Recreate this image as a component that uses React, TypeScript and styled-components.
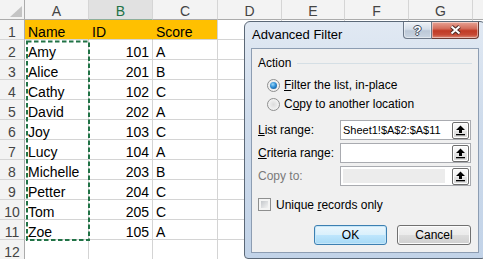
import React from "react";
import styled, { createGlobalStyle } from "styled-components";

const GlobalStyle = createGlobalStyle`
  html, body { margin: 0; padding: 0; background: #fff; overflow: hidden; }
  body { font-family: "Liberation Sans", Arial, sans-serif; }
`;

const colWidths = [64, 64, 65, 64, 63, 64, 64, 64];
// last column sits off the right edge, so its letter is not shown
const colNames = ["A", "B", "C", "D", "E", "F", "G", ""];

type Row = { name: string; id: string; score: string };
const data: Row[] = [
  { name: "Amy", id: "101", score: "A" },
  { name: "Alice", id: "201", score: "B" },
  { name: "Cathy", id: "102", score: "C" },
  { name: "David", id: "202", score: "A" },
  { name: "Joy", id: "103", score: "C" },
  { name: "Lucy", id: "104", score: "A" },
  { name: "Michelle", id: "203", score: "B" },
  { name: "Petter", id: "204", score: "C" },
  { name: "Tom", id: "205", score: "C" },
  { name: "Zoe", id: "105", score: "A" },
];

const Page = styled.div`
  position: relative;
  width: 483px;
  height: 259px;
  overflow: hidden;
`;

const Sheet = styled.div`
  display: grid;
  grid-template-columns: 25px ${colWidths.map((w) => w + "px").join(" ")};
  grid-auto-rows: 20px;
  font-size: 14px;
`;

const HeaderBase = styled.div`
  box-sizing: border-box;
  background: #f3f3f3;
  color: #444;
  text-align: center;
  padding-top: 3px;
  line-height: 16px;
  white-space: nowrap;
  overflow: hidden;
`;

const Corner = styled(HeaderBase)`
  display: flex;
  justify-content: flex-end;
  align-items: flex-end;
  padding: 0 2px 2px 0;
  border-right: 1px solid #ababab;
  border-bottom: 1px solid #ababab;
`;

const ColHeader = styled(HeaderBase)<{ $selected?: boolean }>`
  border-right: 1px solid #d5d5d5;
  border-bottom: 1px solid ${(p) => (p.$selected ? "#8fae9a" : "#ababab")};
  background: ${(p) => (p.$selected ? "#e1e1e1" : "#f3f3f3")};
  color: ${(p) => (p.$selected ? "#217346" : "#444")};
`;

const RowHeader = styled(HeaderBase)`
  padding-top: 4px;
  border-right: 1px solid #ababab;
  border-bottom: 1px solid #d5d5d5;
`;

const Cell = styled.div<{ $fill?: string; $right?: boolean; $joined?: boolean }>`
  box-sizing: border-box;
  padding: 4px 3px 0 3px;
  line-height: 16px;
  color: #000;
  white-space: nowrap;
  text-align: ${(p) => (p.$right ? "right" : "left")};
  background: ${(p) => p.$fill || "#fff"};
  border-right: 1px solid ${(p) => (p.$joined ? p.$fill : "#d4d4d4")};
  border-bottom: 1px solid #d4d4d4;
`;

const CopyMarquee = styled.svg`
  position: absolute;
  left: 25px;
  top: 40px;
`;

const Window = styled.div`
  position: absolute;
  left: 244px;
  top: 21px;
  width: 242px;
  height: 238px;
  box-sizing: border-box;
  border: 1px solid #5b6877;
  border-radius: 6px 6px 4px 4px;
  background: linear-gradient(#e1e9f3, #cfdcec 40%, #c2d3e8);
  padding: 0 6px 5px 6px;
  display: flex;
  flex-direction: column;
  font-size: 12px;
  color: #000;
`;

const TitleBar = styled.div`
  height: 26px;
  display: flex;
  align-items: flex-start;
`;

const Title = styled.div`
  flex: 1;
  padding-left: 1px;
  line-height: 26px;
  font-size: 13px;
  color: #000;
`;

const CaptionButton = styled.div<{ $close?: boolean }>`
  height: 17px;
  width: ${(p) => (p.$close ? 47 : 29)}px;
  box-sizing: border-box;
  border: 1px solid ${(p) => (p.$close ? "#6d3a33" : "#6c7888")};
  border-top: none;
  border-left-width: ${(p) => (p.$close ? 0 : 1)}px;
  border-radius: ${(p) => (p.$close ? "0 0 4px 0" : "0 0 0 4px")};
  background: ${(p) =>
    p.$close
      ? "linear-gradient(#e8a395, #d46f5d 40%, #c03a26 55%, #c64a36 80%, #dc8a78)"
      : "linear-gradient(#eef2f7, #d5dee9 45%, #bcc8d7 55%, #cad5e2)"};
  box-shadow: inset 0 0 0 1px rgba(255, 255, 255, 0.45);
  display: flex;
  align-items: center;
  justify-content: center;
`;

const HelpGlyph = styled.span`
  font-weight: bold;
  font-size: 13px;
  line-height: 13px;
  color: #fff;
  text-shadow: -1px 0 #3e4a5a, 1px 0 #3e4a5a, 0 -1px #3e4a5a, 0 1px #3e4a5a;
`;

const Client = styled.div`
  flex: 1;
  box-sizing: border-box;
  border: 1px solid #8d9db2;
  background: #f0f0f0;
  padding: 7px 7px 0 6px;
  display: flex;
  flex-direction: column;
`;

const GroupHeader = styled.div`
  height: 14px;
  display: flex;
  align-items: center;
  line-height: 14px;
  &::after {
    content: "";
    flex: 1;
    height: 1px;
    margin-left: 6px;
    margin-right: -1px;
    background: #d5dfe5;
  }
`;

const OptionRow = styled.div<{ $first?: boolean }>`
  height: 18px;
  display: flex;
  align-items: center;
  gap: 4px;
  padding-left: 9px;
  margin-top: ${(p) => (p.$first ? 6 : 1)}px;
`;

const Radio = styled.span<{ $checked?: boolean }>`
  width: 13px;
  height: 13px;
  box-sizing: border-box;
  flex: none;
  border-radius: 50%;
  border: 1px solid #8e8f8f;
  background: radial-gradient(circle at 50% 50%, #dcdcdc 0, #eeeeee 55%, #fbfbfb 100%);
  display: flex;
  align-items: center;
  justify-content: center;
  &::after {
    content: "";
    width: 7px;
    height: 7px;
    border-radius: 50%;
    display: ${(p) => (p.$checked ? "block" : "none")};
    background: radial-gradient(circle at 40% 35%, #9bd8f8 0, #2f8ed6 45%, #0f4c86 100%);
  }
`;

const Key = styled.span`
  text-decoration: underline;
  text-underline-offset: 1px;
`;

const Fields = styled.div`
  margin-top: 7px;
  display: flex;
  flex-direction: column;
  gap: 3px;
`;

const FieldRow = styled.div<{ $disabled?: boolean }>`
  height: 20px;
  display: flex;
  align-items: center;
  color: ${(p) => (p.$disabled ? "#7a7a7a" : "#000")};
`;

const Label = styled.div`
  flex: 1;
  white-space: nowrap;
`;

const Field = styled.div`
  flex: none;
  width: 131px;
  height: 20px;
  box-sizing: border-box;
  border: 1px solid #a9abb0;
  background: #fff;
  display: flex;
  align-items: center;
  padding: 0 1px 0 2px;
`;

const FieldText = styled.div`
  flex: 1;
  font-size: 11px;
  color: #000;
  white-space: nowrap;
  overflow: hidden;
`;

const DisabledFill = styled.div`
  width: 102px;
  height: 14px;
  background: #ececec;
  margin-right: auto;
`;

const RefButton = styled.div`
  flex: none;
  width: 17px;
  height: 17px;
  box-sizing: border-box;
  border: 1px solid #6e6e6e;
  border-radius: 2px;
  background: linear-gradient(#fbfbfb, #f0f0f0 50%, #e4e4e4 50%, #dadada);
  box-shadow: inset 0 0 0 1px #fff;
  display: flex;
  align-items: center;
  justify-content: center;
`;

const CheckRow = styled.div`
  margin-top: 12px;
  height: 13px;
  display: flex;
  align-items: center;
  gap: 5px;
`;

const CheckBox = styled.span`
  width: 13px;
  height: 13px;
  box-sizing: border-box;
  border: 1px solid #8e8f8f;
  padding: 2px;
  background: linear-gradient(135deg, #c4c7cb, #f3f3f3) content-box, #f4f4f4;
`;

const Buttons = styled.div`
  margin-top: 14px;
  display: flex;
  justify-content: flex-end;
  gap: 10px;
`;

const PushButton = styled.div<{ $default?: boolean; $w: number }>`
  width: ${(p) => p.$w}px;
  height: 20px;
  box-sizing: border-box;
  border: 1px solid ${(p) => (p.$default ? "#3c7fb1" : "#707070")};
  border-radius: 3px;
  background: ${(p) =>
    p.$default
      ? "linear-gradient(#eaf6fd, #d9f0fc 50%, #bee6fd 50%, #a7d9f5)"
      : "linear-gradient(#f2f2f2, #ebebeb 50%, #dddddd 50%, #cfcfcf)"};
  box-shadow: inset 0 0 0 1px ${(p) => (p.$default ? "#c6e6f8" : "#fcfcfc")};
  display: flex;
  align-items: center;
  justify-content: center;
  color: #000;
`;

const UpArrow = () => (
  <svg width="11" height="11" viewBox="0 0 11 11">
    <polygon points="5.5,0.5 10,5 7,5 7,8 4,8 4,5 1,5" fill="#000" />
    <rect x="1" y="9" width="9" height="1.3" fill="#000" />
  </svg>
);

const CloseGlyph = () => (
  <svg width="13" height="10" viewBox="0 0 13 10">
    <path d="M2.5 1.5 L10.5 8.5 M10.5 1.5 L2.5 8.5" stroke="#4b2a26" strokeWidth="4" />
    <path d="M2.5 1.5 L10.5 8.5 M10.5 1.5 L2.5 8.5" stroke="#fff" strokeWidth="2" />
  </svg>
);

const App = () => {
  const rowCount = 12;
  const renderRow = (r: number) => {
    const cells: React.ReactNode[] = [];
    cells.push(<RowHeader key="h">{r}</RowHeader>);
    for (let c = 0; c < colWidths.length; c++) {
      let text = "";
      let right = false;
      let fill: string | undefined;
      let joined = false;
      if (r === 1 && c < 3) {
        text = ["Name", "ID", "Score"][c];
        fill = "#ffc000";
        joined = c < 2;
      } else if (r >= 2 && r <= 11 && c < 3) {
        const row = data[r - 2];
        text = [row.name, row.id, row.score][c];
        right = c === 1;
      }
      cells.push(
        <Cell key={c} $fill={fill} $right={right} $joined={joined}>
          {text}
        </Cell>
      );
    }
    return cells;
  };

  return (
    <Page>
      <GlobalStyle />
      <Sheet>
        <Corner>
          <svg width="12" height="11" viewBox="0 0 12 11">
            <polygon points="12,0 12,11 0,11" fill="#c4c4c4" />
          </svg>
        </Corner>
        {colNames.map((n, i) => (
          <ColHeader key={i} $selected={n === "B"}>
            {n}
          </ColHeader>
        ))}
        {Array.from({ length: rowCount }, (_, i) => renderRow(i + 1))}
      </Sheet>

      <CopyMarquee width="66" height="202" viewBox="0 0 66 202">
        <rect
          x="2"
          y="1.5"
          width="62"
          height="198.5"
          fill="none"
          stroke="#217346"
          strokeWidth="2"
          strokeDasharray="4.5 2.5"
        />
      </CopyMarquee>

      <Window>
        <TitleBar>
          <Title>Advanced Filter</Title>
          <CaptionButton>
            <HelpGlyph>?</HelpGlyph>
          </CaptionButton>
          <CaptionButton $close>
            <CloseGlyph />
          </CaptionButton>
        </TitleBar>
        <Client>
          <GroupHeader>Action</GroupHeader>
          <OptionRow $first>
            <Radio $checked />
            <span>
              <Key>F</Key>ilter the list, in-place
            </span>
          </OptionRow>
          <OptionRow>
            <Radio />
            <span>
              C<Key>o</Key>py to another location
            </span>
          </OptionRow>

          <Fields>
            <FieldRow>
              <Label>
                <Key>L</Key>ist range:
              </Label>
              <Field>
                <FieldText>Sheet1!$A$2:$A$11</FieldText>
                <RefButton>
                  <UpArrow />
                </RefButton>
              </Field>
            </FieldRow>
            <FieldRow>
              <Label>
                <Key>C</Key>riteria range:
              </Label>
              <Field>
                <FieldText />
                <RefButton>
                  <UpArrow />
                </RefButton>
              </Field>
            </FieldRow>
            <FieldRow $disabled>
              <Label>Copy to:</Label>
              <Field>
                <DisabledFill />
                <RefButton>
                  <UpArrow />
                </RefButton>
              </Field>
            </FieldRow>
          </Fields>

          <CheckRow>
            <CheckBox />
            <span>
              Unique <Key>r</Key>ecords only
            </span>
          </CheckRow>

          <Buttons>
            <PushButton $default $w={73}>
              OK
            </PushButton>
            <PushButton $w={74}>Cancel</PushButton>
          </Buttons>
        </Client>
      </Window>
    </Page>
  );
};

export default App;
